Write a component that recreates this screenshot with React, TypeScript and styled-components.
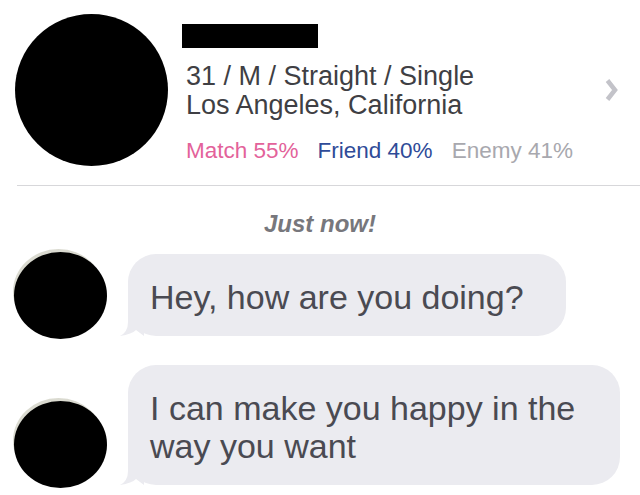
import React from "react";
import styled, { createGlobalStyle } from "styled-components";

const Global = createGlobalStyle`
  html, body { margin: 0; padding: 0; background: #ffffff; }
  body { font-family: "Liberation Sans", Arial, Helvetica, sans-serif; }
  * { box-sizing: border-box; }
`;

const Page = styled.div`
  width: 640px;
  height: 495px;
  overflow: hidden;
  background: #fff;
  display: flex;
  flex-direction: column;
`;

const Header = styled.div`
  display: flex;
  align-items: flex-start;
  padding: 14px 0 0 15px;
  height: 185px;
`;

const ProfilePhoto = styled.div`
  width: 153px;
  height: 152px;
  border-radius: 50%;
  background: #000;
  flex-shrink: 0;
`;

const Info = styled.div`
  display: flex;
  flex-direction: column;
  margin-left: 14px;
  padding-top: 10px;
  flex: 1;
`;

const NameRedaction = styled.div`
  width: 136px;
  height: 24px;
  background: #000;
`;

const Detail = styled.div<{ $first?: boolean }>`
  margin-left: 4px;
  margin-top: ${(p) => (p.$first ? "14px" : "0")};
  font-size: 27px;
  line-height: 29px;
  color: #3f3f44;
  white-space: nowrap;
`;

const Scores = styled.div`
  display: flex;
  gap: 19px;
  margin: 18px 0 0 4px;
  font-size: 22.5px;
  line-height: 26px;
  white-space: nowrap;
`;

const Score = styled.span<{ $color: string }>`
  color: ${(p) => p.$color};
`;

const ChevronCell = styled.div`
  width: 52px;
  height: 152px;
  display: flex;
  align-items: center;
  justify-content: flex-start;
  padding-left: 17px;
`;

const Divider = styled.div`
  margin-left: 17px;
  height: 1px;
  background: #d7d7da;
`;

const Stamp = styled.div`
  margin-top: 24px;
  text-align: center;
  font-size: 24px;
  line-height: 28px;
  font-weight: bold;
  font-style: italic;
  color: #77777c;
`;

const Thread = styled.div`
  display: flex;
  flex-direction: column;
  gap: 29px;
  margin-top: 14px;
  padding: 0 20px 0 14px;
`;

const Row = styled.div`
  display: flex;
  align-items: flex-end;
  gap: 21px;
`;

const Avatar = styled.div`
  width: 93px;
  height: 87px;
  border-radius: 50%;
  background: #000;
  flex-shrink: 0;
  margin-bottom: -3px;
  box-shadow: -2px -4px 0 -1px rgba(150, 150, 120, 0.35);
`;

const Bubble = styled.div`
  position: relative;
  background: #ebebf0;
  border-radius: 28px;
  padding: 24px 42px 20px 22px;
  font-size: 34px;
  line-height: 38px;
  color: #4a4a52;
  min-width: 0;
`;

const Tail = styled.svg`
  position: absolute;
  left: -8px;
  bottom: 0;
  width: 24px;
  height: 32px;
`;

const Chevron = () => (
  <svg width="13" height="24" viewBox="0 0 13 24">
    <path d="M2.5 2.5 L10 12 L2.5 21.5" fill="none" stroke="#c3c3c9" strokeWidth="4.5" strokeLinejoin="miter" />
  </svg>
);

const BubbleTail = () => (
  <Tail viewBox="0 0 24 32">
    <path d="M8 0 L8 18 Q8 28 0 32 Q12 30 16 26 L24 32 L24 0 Z" fill="#ebebf0" />
  </Tail>
);

const Message = ({ children }: { children: React.ReactNode }) => (
  <Row>
    <Avatar />
    <Bubble>
      <BubbleTail />
      {children}
    </Bubble>
  </Row>
);

export default function App() {
  return (
    <Page>
      <Global />
      <Header>
        <ProfilePhoto />
        <Info>
          <NameRedaction />
          <Detail $first>31 / M / Straight / Single</Detail>
          <Detail>Los Angeles, California</Detail>
          <Scores>
            <Score $color="#e3629a">Match 55%</Score>
            <Score $color="#2f4b98">Friend 40%</Score>
            <Score $color="#a8a8ae">Enemy 41%</Score>
          </Scores>
        </Info>
        <ChevronCell>
          <Chevron />
        </ChevronCell>
      </Header>
      <Divider />
      <Stamp>Just now!</Stamp>
      <Thread>
        <Message>Hey, how are you doing?</Message>
        <Message>I can make you happy in the way you want</Message>
      </Thread>
    </Page>
  );
}
